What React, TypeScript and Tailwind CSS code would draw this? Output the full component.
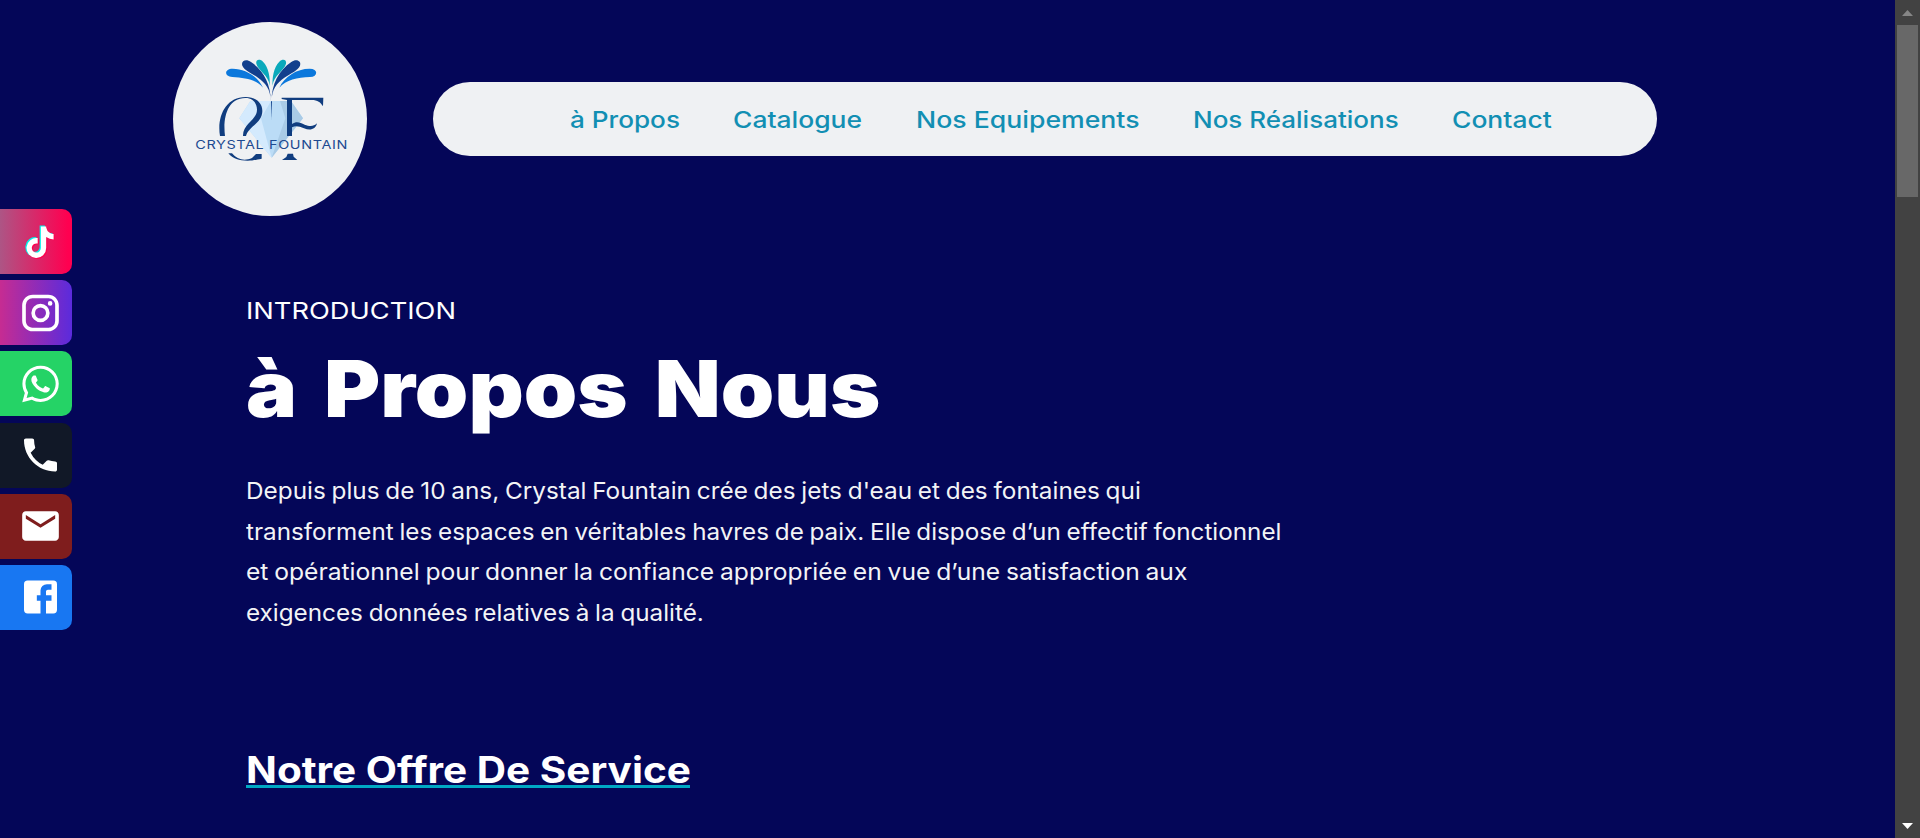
import type { ReactNode } from "react";

const tiktokNote =
  "M448,209.91a210.06,210.06,0,0,1-122.77-39.25V349.38A162.55,162.55,0,1,1,185,188.31V278.2a74.62,74.62,0,1,0,52.23,71.18V0l88,0a121.18,121.18,0,0,0,1.86,22.17h0A122.18,122.18,0,0,0,381,102.39a121.43,121.43,0,0,0,67,20.14Z";

function MaterialIcon({ children }: { children: ReactNode }) {
  return (
    <svg viewBox="0 0 24 24" className="size-11 translate-x-[0.5px] fill-white">
      {children}
    </svg>
  );
}

const socials = [
  {
    name: "TikTok",
    tile: "bg-[linear-gradient(90deg,#ad5585_0px,#ff0050_68px)]",
    icon: (
      <svg viewBox="0 0 44 44" className="size-11">
        <g transform="translate(7.3 5.6) scale(0.0605 0.0615)">
          <path d={tiktokNote} fill="#00f2ea" />
        </g>
        <g transform="translate(9.7 7.4) scale(0.0605 0.0615)">
          <path d={tiktokNote} fill="#ff004f" />
        </g>
        <g transform="translate(8.5 6.5) scale(0.0605 0.0615)">
          <path d={tiktokNote} fill="#fff" />
        </g>
      </svg>
    ),
  },
  {
    name: "Instagram",
    tile: "bg-[linear-gradient(90deg,#c62c92_0px,#5b2bdc_72px)]",
    icon: (
      <MaterialIcon>
        <path d="M7.8 2h8.4C19.4 2 22 4.6 22 7.8v8.4a5.8 5.8 0 0 1-5.8 5.8H7.8C4.6 22 2 19.4 2 16.2V7.8A5.8 5.8 0 0 1 7.8 2m-.2 2A3.6 3.6 0 0 0 4 7.6v8.8C4 18.39 5.61 20 7.6 20h8.8a3.6 3.6 0 0 0 3.6-3.6V7.6C20 5.61 18.39 4 16.4 4H7.6m9.65 1.5a1.25 1.25 0 1 1 0 2.5 1.25 1.25 0 0 1 0-2.5M12 7a5 5 0 1 1 0 10 5 5 0 0 1 0-10m0 2a3 3 0 1 0 0 6 3 3 0 0 0 0-6Z" />
      </MaterialIcon>
    ),
  },
  {
    name: "WhatsApp",
    tile: "bg-[#25d366]",
    icon: (
      <MaterialIcon>
        <path d="M12.04 2c-5.46 0-9.91 4.45-9.91 9.91 0 1.75.46 3.45 1.32 4.95L2.05 22l5.25-1.38c1.45.79 3.08 1.21 4.74 1.21 5.46 0 9.91-4.45 9.91-9.91 0-2.65-1.03-5.14-2.9-7.01A9.816 9.816 0 0 0 12.04 2m.01 1.67c2.2 0 4.26.86 5.82 2.42a8.225 8.225 0 0 1 2.41 5.83c0 4.54-3.7 8.23-8.24 8.23-1.48 0-2.93-.39-4.19-1.15l-.3-.17-3.12.82.83-3.04-.2-.32a8.188 8.188 0 0 1-1.26-4.38c.01-4.54 3.7-8.24 8.25-8.24M8.53 7.33c-.16 0-.43.06-.66.31-.22.25-.87.86-.87 2.07 0 1.22.89 2.39 1 2.56.14.17 1.76 2.67 4.25 3.73.59.27 1.05.42 1.41.53.59.19 1.13.16 1.56.1.48-.07 1.46-.6 1.67-1.18.21-.58.21-1.07.15-1.18-.07-.1-.23-.16-.48-.27-.25-.14-1.47-.74-1.69-.82-.23-.08-.37-.12-.56.12-.16.25-.64.81-.78.97-.15.17-.29.19-.53.07-.26-.13-1.06-.39-2-1.23-.74-.66-1.23-1.47-1.38-1.72-.12-.24-.01-.39.11-.5.11-.11.27-.29.37-.44.13-.14.17-.25.25-.41.08-.17.04-.31-.02-.43-.06-.11-.56-1.35-.77-1.84-.2-.48-.4-.42-.56-.43-.14 0-.3-.01-.47-.01Z" />
      </MaterialIcon>
    ),
  },
  {
    name: "Téléphone",
    tile: "bg-[#111827]",
    icon: (
      <MaterialIcon>
        <path d="M20 15.5c-1.25 0-2.45-.2-3.57-.57a1.02 1.02 0 0 0-1.02.24l-2.2 2.2a15.045 15.045 0 0 1-6.59-6.59l2.2-2.21a.96.96 0 0 0 .25-1A11.36 11.36 0 0 1 8.5 4c0-.55-.45-1-1-1H4c-.55 0-1 .45-1 1 0 9.39 7.61 17 17 17 .55 0 1-.45 1-1v-3.5c0-.55-.45-1-1-1Z" />
      </MaterialIcon>
    ),
  },
  {
    name: "Email",
    tile: "bg-[#7f1d1d]",
    icon: (
      <MaterialIcon>
        <path d="M20 4H4c-1.1 0-1.99.9-1.99 2L2 18c0 1.1.9 2 2 2h16c1.1 0 2-.9 2-2V6c0-1.1-.9-2-2-2Zm0 4-8 5-8-5V6l8 5 8-5v2Z" />
      </MaterialIcon>
    ),
  },
  {
    name: "Facebook",
    tile: "bg-[#1877f2]",
    icon: (
      <MaterialIcon>
        <path d="M5 3h14a2 2 0 0 1 2 2v14a2 2 0 0 1-2 2h-4v-7h3v-3h-3V9a1 1 0 0 1 1-1h2V5h-2.5A3.5 3.5 0 0 0 12 8.5V11h-2v3h2v7H5a2 2 0 0 1-2-2V5a2 2 0 0 1 2-2Z" />
      </MaterialIcon>
    ),
  },
];

const links = [
  { label: "à Propos", box: "w-[109px]", stretch: "scale-x-[1.136]" },
  { label: "Catalogue", box: "w-[129px]", stretch: "scale-x-[1.15]" },
  { label: "Nos Equipements", box: "w-[223px]", stretch: "scale-x-[1.158]" },
  { label: "Nos Réalisations", box: "w-[205px]", stretch: "scale-x-[1.13]" },
  { label: "Contact", box: "w-[99px]", stretch: "scale-x-[1.15]" },
];

const lines = [
  {
    text: "Depuis plus de 10 ans, Crystal Fountain crée des jets d'eau et des fontaines qui",
    stretch: "scale-x-[1.058]",
  },
  {
    text: "transforment les espaces en véritables havres de paix. Elle dispose d’un effectif fonctionnel",
    stretch: "scale-x-[1.054]",
  },
  {
    text: "et opérationnel pour donner la confiance appropriée en vue d’une satisfaction aux",
    stretch: "scale-x-[1.07]",
  },
  { text: "exigences données relatives à la qualité.", stretch: "scale-x-[1.055]" },
];

function Spray() {
  return (
    <>
      <path d="M309 233C289 209 255 203 217 201c-25-1-25-25 1-25 39 0 76 24 91 57Z" fill="#0b78dc" />
      <path d="M332 273c0-36-16-54-38-70-19-13-41-22-47-36-5-13 10-22 26-11 37 24 60 68 59 117Z" fill="#123f8d" />
      <path d="M329 227c-2-31-35-46-40-66-3-13 11-15 20-6 17 17 22 48 20 72Z" fill="#0aa9bb" />
    </>
  );
}

function Logo() {
  return (
    <div className="size-[194px] shrink-0 overflow-hidden rounded-full bg-[#eff1f3]">
      <svg viewBox="39 36 582 582" className="size-full">
        <path d="M271 273h122l36 52-94 118-97-118Z" fill="#bbdcf6" />
        <path d="M271 273l-33 52 97 118-32-118 30-52Z" fill="#d4eafd" />
        <path d="M360 273h33l36 52-94 118 41-118Z" fill="#a9cbe6" />
        <Spray />
        <g transform="translate(667 0) scale(-1 1)">
          <Spray />
        </g>
        <path d="M333 274h3l-1 55Z" fill="#12408a" />
        <g fill="#103d7f">
          <path d="M180 378c-10-58 17-118 78-117 28 0 49 17 49 42 0 36-41 46-49 75h-9c-1-37 42-48 42-79 0-20-13-35-34-35-54-1-69 58-62 114Z" />
          <path d="M205 430h11c15 19 38 24 60 14l12-12h17v14c-17 3-25 6-42 6-26 0-44-5-58-22Z" />
          <path d="M365 263h125l-1 26c-7-12-16-19-34-19h-59v72c15-10 25-3 38 2 15 6 27 6 37-4-4 18-20 23-39 15-14-6-25-9-36-3v26h-15V270l-16-3Z" />
          <path d="M383 431h16l2 9 11 10h-46l13-9Z" />
        </g>
        <text
          x="106"
          y="416"
          textLength="458"
          lengthAdjust="spacingAndGlyphs"
          fill="#1d4a91"
          fontSize="35"
          letterSpacing="1.5"
          className="font-['Inter',sans-serif]"
        >
          CRYSTAL FOUNTAIN
        </text>
      </svg>
    </div>
  );
}

export default function App() {
  return (
    <div className="relative flex h-[838px] w-full overflow-hidden bg-[#040658] font-['Inter',sans-serif] text-white">
      <div className="flex-1">
        <header className="flex items-center gap-[66px] pt-[22px] pl-[173px]">
          <Logo />
          <nav className="flex h-[74px] w-[1224px] items-center gap-[54px] rounded-full bg-[#eff1f3] pt-[3px] pl-[137px] text-[23px] font-medium text-[#128fb3]">
            {links.map((link) => (
              <a key={link.label} href="#" className={`${link.box} whitespace-nowrap`}>
                <span className={`inline-block origin-left ${link.stretch}`}>{link.label}</span>
              </a>
            ))}
          </nav>
        </header>

        <main className="flex flex-col items-start pl-[245.5px]">
          <p className="mt-[77px] origin-left scale-x-[1.185] text-[23px] leading-9">INTRODUCTION</p>
          <h1 className="mt-5 origin-left scale-x-[1.099] text-[78px] leading-[80px] font-black whitespace-nowrap [word-spacing:9px]">
            à Propos Nous
          </h1>
          <p className="mt-[42px] text-[23px] leading-[40.7px] text-[#f3f4f6] [word-spacing:-1px]">
            {lines.map((line) => (
              <span key={line.text} className={`block w-max origin-left ${line.stretch}`}>
                {line.text}
              </span>
            ))}
          </p>
          <h2 className="mt-[120px] w-[444.5px] border-b-3 border-[#00a8c4] pt-0.5 text-[36.5px] leading-[29px] font-bold whitespace-nowrap">
            <span className="inline-block origin-left scale-x-[1.11]">Notre Offre De Service</span>
          </h2>
        </main>
      </div>

      <aside className="absolute top-[209px] left-0 flex flex-col gap-[6.2px]">
        {socials.map((social) => (
          <a
            key={social.name}
            href="#"
            aria-label={social.name}
            className={`flex h-[65px] w-[72px] items-center rounded-r-[10px] pl-[18px] ${social.tile}`}
          >
            {social.icon}
          </a>
        ))}
      </aside>

      <div className="flex w-[25px] flex-col items-center justify-between bg-[#424242] pt-2.5 pb-[9px]">
        <div className="flex flex-col items-center gap-[9px]">
          <svg viewBox="0 0 11 6" className="h-1.5 w-[11px] fill-[#868686]">
            <path d="M0 6 5.5 0 11 6Z" />
          </svg>
          <div className="h-[172px] w-[21px] bg-[#686868]" />
        </div>
        <svg viewBox="0 0 11 6" className="h-1.5 w-[11px] fill-white">
          <path d="M0 0 5.5 6 11 0Z" />
        </svg>
      </div>
    </div>
  );
}
